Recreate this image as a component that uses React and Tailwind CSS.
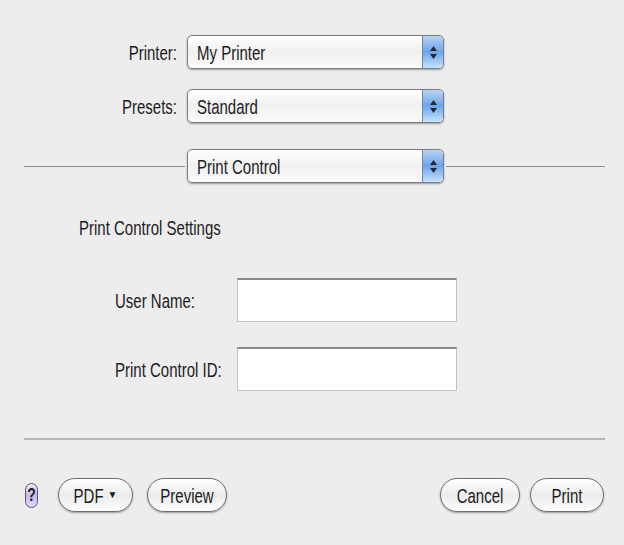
import React from 'react';

const font = { fontFamily: '"Liberation Sans", Arial, sans-serif' };

// the reference text is tall and narrow, so stretch it vertically
function T({ children, className = '' }) {
  return <span className={`inline-block scale-y-[1.3] ${className}`}>{children}</span>;
}

function Stepper() {
  return (
    <div className="flex h-full w-[21px] flex-col items-center justify-center gap-[3px] rounded-r-[5px] border-l border-[#6f86a8] bg-gradient-to-b from-[#b7d3f5] via-[#6ea4ea] to-[#c4e4fd]">
      <svg width="7" height="5" viewBox="0 0 7 5"><path d="M3.5 0 L7 5 L0 5 Z" fill="#1e2a3a" /></svg>
      <svg width="7" height="5" viewBox="0 0 7 5"><path d="M0 0 L7 0 L3.5 5 Z" fill="#1e2a3a" /></svg>
    </div>
  );
}

function Popup({ value }) {
  return (
    <div className="flex h-[34px] w-[257px] items-center rounded-[5px] border border-[#7d7d7d] bg-gradient-to-b from-white via-[#f0f0f0] to-[#fbfbfb] shadow-[0_1px_2px_rgba(0,0,0,0.35)]">
      <span className="flex-1 pl-[9px] text-[15px] leading-none text-[#1c1c1c]"><T>{value}</T></span>
      <Stepper />
    </div>
  );
}

function Pill({ children, className = '' }) {
  return (
    <button className={`flex h-[34px] items-center justify-center rounded-full border border-[#6e6e6e] bg-gradient-to-b from-white via-[#ececec] to-[#fdfdfd] text-[15px] leading-none text-[#1c1c1c] shadow-[0_1px_2px_rgba(0,0,0,0.35)] ${className}`}>
      {children}
    </button>
  );
}

export default function App() {
  return (
    <div style={font} className="flex h-[545px] w-[624px] flex-col bg-[#eeedee] text-[#1c1c1c]">
      {/* Printer / Presets */}
      <div className="mt-[35px] flex items-center">
        <div className="w-[177px] text-right text-[15px] leading-none"><T>Printer:</T></div>
        <div className="ml-[10px]"><Popup value="My Printer" /></div>
      </div>
      <div className="mt-[20px] flex items-center">
        <div className="w-[177px] text-right text-[15px] leading-none"><T>Presets:</T></div>
        <div className="ml-[10px]"><Popup value="Standard" /></div>
      </div>

      {/* Panel selector with rules */}
      <div className="mt-[26px] flex items-center">
        <div className="ml-[24px] h-px w-[161px] bg-[#8c8c8c]" />
        <div className="ml-[2px]"><Popup value="Print Control" /></div>
        <div className="ml-[2px] h-px w-[159px] bg-[#8c8c8c]" />
      </div>

      <div className="ml-[79px] mt-[35px] h-[20px] text-[15px] leading-[20px]"><T>Print Control Settings</T></div>

      <div className="mt-[40px] flex items-center">
        <div className="ml-[115px] w-[122px] text-[15px] leading-none"><T>User Name:</T></div>
        <div className="h-[44px] w-[220px] border border-[#c2c2c2] border-t-2 border-t-[#8a8a8a] bg-white" />
      </div>
      <div className="mt-[25px] flex items-center">
        <div className="ml-[115px] w-[122px] text-[15px] leading-none"><T>Print Control ID:</T></div>
        <div className="h-[44px] w-[220px] border border-[#c2c2c2] border-t-2 border-t-[#8a8a8a] bg-white" />
      </div>

      <div className="ml-[24px] mt-[47px] h-[2px] w-[581px] bg-[#b4b4b4]" />

      {/* Bottom buttons */}
      <div className="mt-[38px] flex items-center">
        <div className="ml-[25px] flex h-[25px] w-[13px] items-center justify-center rounded-full border border-[#5e4f80] bg-gradient-to-b from-[#efe6ff] via-[#c9b8ec] to-[#e3d8fb] text-[14px] font-bold leading-none text-[#1c1c1c]"><T>?</T></div>
        <Pill className="ml-[20px] w-[75px]"><T>PDF</T><span className="ml-[4px] text-[10px]">▼</span></Pill>
        <Pill className="ml-[14px] w-[80px]"><T>Preview</T></Pill>
        <div className="flex-1" />
        <Pill className="w-[80px]"><T>Cancel</T></Pill>
        <Pill className="ml-[10px] mr-[20px] w-[74px]"><T>Print</T></Pill>
      </div>
    </div>
  );
}
